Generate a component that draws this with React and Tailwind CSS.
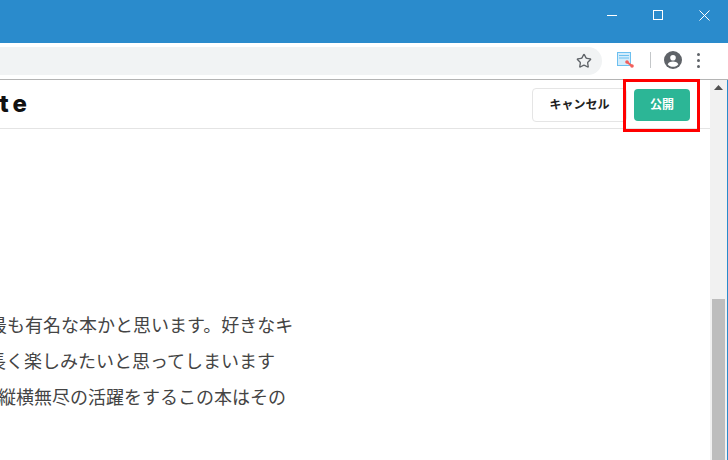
import React from 'react';
import { Star } from 'lucide-react';

const jpFont = "font-['Liberation_Sans','Noto_Sans_CJK_JP',sans-serif]";

const lines = [
  { text: '最も有名な本かと思います。好きなキ', offset: 'ml-[-11px]' },
  { text: '長く楽しみたいと思ってしまいます', offset: 'ml-[-12px]' },
  { text: '縦横無尽の活躍をするこの本はその', offset: 'ml-[-2px]' },
];

const App = () => {
  return (
    <div className={`relative flex h-[460px] w-[728px] flex-col overflow-hidden bg-white ${jpFont}`}>
      {/* Title bar */}
      <div className="flex h-[43px] shrink-0 items-start justify-end bg-[#2a8bcc] pr-px">
        <div className="flex h-[30px] w-[46px] items-center justify-center">
          <div className="h-px w-[10px] bg-white" />
        </div>
        <div className="flex h-[30px] w-[46px] items-center justify-center">
          <div className="h-[10px] w-[10px] border border-white" />
        </div>
        <div className="flex h-[30px] w-[46px] items-center justify-center">
          <svg width="11" height="11" viewBox="0 0 11 11" stroke="white" strokeWidth="1">
            <path d="M0.5 0.5L10.5 10.5M10.5 0.5L0.5 10.5" />
          </svg>
        </div>
      </div>

      {/* Toolbar */}
      <div className="flex h-[37px] shrink-0 items-start border-b border-[#b4b4b4] pt-[4px]">
        <div className="flex h-[28px] w-[602px] items-center justify-end rounded-r-[14px] bg-[#f1f3f4] pr-[10px]">
          <Star className="h-[16px] w-[16px] text-[#5f6368]" strokeWidth={2} />
        </div>
        <svg className="ml-[15px] mt-[4px]" width="18" height="18" viewBox="0 0 18 18">
          <rect x="0.5" y="1.5" width="13" height="13" fill="#d3ecfb" stroke="#6cc0f0" />
          <path d="M2 4.5H12M2 7H12" stroke="#6cc0f0" />
          <path d="M10 11L15 15" stroke="#f25f5c" strokeWidth="2" />
          <circle cx="10" cy="11" r="1.8" fill="#f25f5c" />
          <circle cx="15" cy="15" r="1.8" fill="#f25f5c" />
        </svg>
        <div className="ml-[15px] mt-[5px] h-[16px] w-px bg-[#c4c7c9]" />
        <svg className="ml-[13px] mt-[4px]" width="18" height="18" viewBox="0 0 18 18">
          <circle cx="9" cy="9" r="9" fill="#5f6368" />
          <circle cx="9" cy="6.8" r="2.8" fill="white" />
          <path d="M3.6 13.2C5 11.2 7 10.6 9 10.6C11 10.6 13 11.2 14.4 13.2C13 15 11 15.8 9 15.8C7 15.8 5 15 3.6 13.2Z" fill="white" />
        </svg>
        <div className="ml-[15px] mt-[6px] flex flex-col gap-[3px]">
          <div className="h-[3px] w-[3px] rounded-full bg-[#5f6368]" />
          <div className="h-[3px] w-[3px] rounded-full bg-[#5f6368]" />
          <div className="h-[3px] w-[3px] rounded-full bg-[#5f6368]" />
        </div>
      </div>

      {/* Page */}
      <div className="flex min-h-0 flex-1 border-r border-[#2a8bcc]">
        <div className="min-w-0 flex-1 overflow-hidden">
          <div className="flex h-[49px] items-center justify-between border-b border-[#e4e4e4] pr-[20px]">
            <div className="ml-[-54px] text-[24px] font-extrabold tracking-[4px] text-[#111] font-['Inter',sans-serif]">
              Write
            </div>
            <div className="flex items-center gap-[7px] pt-[2px]">
              <button className="h-[34px] w-[95px] rounded-[4px] border border-[#e5e5e5] bg-white text-[12px] font-bold text-[#222]">
                キャンセル
              </button>
              <button className="h-[32px] w-[56px] rounded-[4px] bg-[#2cb696] text-[12px] font-bold text-white">
                公開
              </button>
            </div>
          </div>
          <div className="pt-[179px]">
            {lines.map((line) => (
              <p
                key={line.text}
                className={`h-[36px] whitespace-nowrap text-[18px] leading-[36px] text-[#444] ${line.offset}`}
              >
                {line.text}
              </p>
            ))}
          </div>
        </div>

        {/* Scrollbar */}
        <div className="flex w-[17px] shrink-0 flex-col items-center bg-[#f1f1f1]">
          <svg className="mt-[5px]" width="9" height="5" viewBox="0 0 9 5">
            <path d="M4.5 0L9 5H0Z" fill="#505050" />
          </svg>
          <div className="mt-[209px] w-[13px] flex-1 bg-[#bdbdbd]" />
        </div>
      </div>

      {/* Red annotation over the publish button */}
      <div className="absolute left-[623px] top-[79px] h-[53px] w-[77px] border-[3px] border-[#ff0000]" />
    </div>
  );
};

export default App;
